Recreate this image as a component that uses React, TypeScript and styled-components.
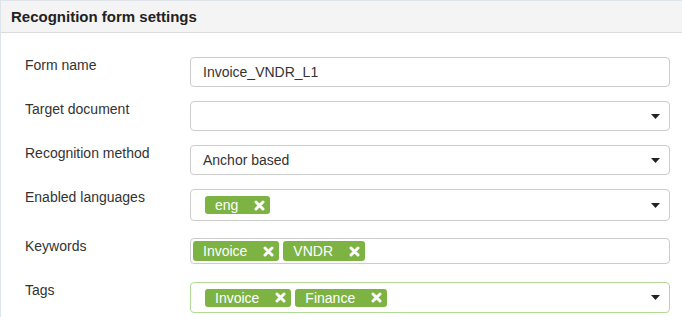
import styled, { createGlobalStyle } from "styled-components";

const GlobalStyle = createGlobalStyle`
  html, body {
    margin: 0;
    padding: 0;
    background: #ffffff;
  }
  body {
    font-family: "Liberation Sans", Arial, sans-serif;
    color: #333333;
  }
`;

const Panel = styled.section`
  width: 682px;
  height: 317px;
  box-sizing: border-box;
  border-top: 1px solid #dfe4ea;
  border-left: 1px solid #dfe4ea;
  overflow: hidden;
`;

const PanelHeader = styled.header`
  display: flex;
  align-items: center;
  height: 31px;
  padding-left: 10px;
  background: #f4f4f4;
  border-bottom: 1px solid #dcdcdc;
`;

const PanelTitle = styled.h1`
  margin: 0;
  font-size: 15px;
  font-weight: 700;
  color: #222222;
`;

const PanelBody = styled.div`
  display: flex;
  flex-direction: column;
  gap: 14px;
  padding: 24px 12px 0 24px;
`;

const Row = styled.div<{ $shift?: number }>`
  display: grid;
  grid-template-columns: 165px 1fr;
  align-items: start;
  margin-top: ${(p) => p.$shift ?? 0}px;
`;

const Label = styled.label`
  font-size: 14px;
  line-height: 16px;
  color: #333333;
`;

const Field = styled.div<{ $height: number; $focus?: boolean; $pad?: number }>`
  display: flex;
  align-items: center;
  gap: 4px;
  height: ${(p) => p.$height}px;
  box-sizing: border-box;
  padding: 0 9px 0 ${(p) => p.$pad ?? 12}px;
  border: 1px solid ${(p) => (p.$focus ? "#b2da95" : "#cccccc")};
  border-radius: 4px;
  background: #ffffff;
  font-size: 14px;
  color: #333333;
`;

const Value = styled.span`
  flex: 1;
`;

const Chips = styled.div`
  display: flex;
  flex: 1;
  gap: 4px;
`;

const Chip = styled.span<{ $height: number }>`
  display: inline-flex;
  align-items: center;
  height: ${(p) => p.$height}px;
  padding: 0 5px 0 10px;
  border-radius: 3px;
  background: #7db343;
  color: #ffffff;
  font-size: 14px;
`;

const ChipClose = styled.svg`
  margin-left: 16px;
  width: 11px;
  height: 11px;
`;

const Caret = styled.svg`
  width: 9px;
  height: 5px;
  flex: none;
`;

function CloseIcon() {
  return (
    <ChipClose viewBox="0 0 11 11">
      <path
        d="M2 2 L9 9 M9 2 L2 9"
        stroke="#ffffff"
        strokeWidth="3"
        strokeLinecap="round"
        fill="none"
      />
    </ChipClose>
  );
}

function CaretIcon() {
  return (
    <Caret viewBox="0 0 9 5">
      <path d="M0 0 H9 L4.5 5 Z" fill="#222222" />
    </Caret>
  );
}

function TagChip({ text, height }: { text: string; height: number }) {
  return (
    <Chip $height={height}>
      {text}
      <CloseIcon />
    </Chip>
  );
}

export default function App() {
  return (
    <>
      <GlobalStyle />
      <Panel>
        <PanelHeader>
          <PanelTitle>Recognition form settings</PanelTitle>
        </PanelHeader>
        <PanelBody>
          <Row>
            <Label>Form name</Label>
            <Field $height={30}>
              <Value>Invoice_VNDR_L1</Value>
            </Field>
          </Row>
          <Row>
            <Label>Target document</Label>
            <Field $height={30}>
              <Value />
              <CaretIcon />
            </Field>
          </Row>
          <Row>
            <Label>Recognition method</Label>
            <Field $height={30}>
              <Value>Anchor based</Value>
              <CaretIcon />
            </Field>
          </Row>
          <Row>
            <Label>Enabled languages</Label>
            <Field $height={32} $pad={14}>
              <Chips>
                <TagChip text="eng" height={18} />
              </Chips>
              <CaretIcon />
            </Field>
          </Row>
          <Row $shift={3}>
            <Label>Keywords</Label>
            <Field $height={26} $pad={2}>
              <Chips>
                <TagChip text="Invoice" height={20} />
                <TagChip text="VNDR" height={20} />
              </Chips>
            </Field>
          </Row>
          <Row $shift={4}>
            <Label>Tags</Label>
            <Field $height={31} $pad={14} $focus>
              <Chips>
                <TagChip text="Invoice" height={18} />
                <TagChip text="Finance" height={18} />
              </Chips>
              <CaretIcon />
            </Field>
          </Row>
        </PanelBody>
      </Panel>
    </>
  );
}
